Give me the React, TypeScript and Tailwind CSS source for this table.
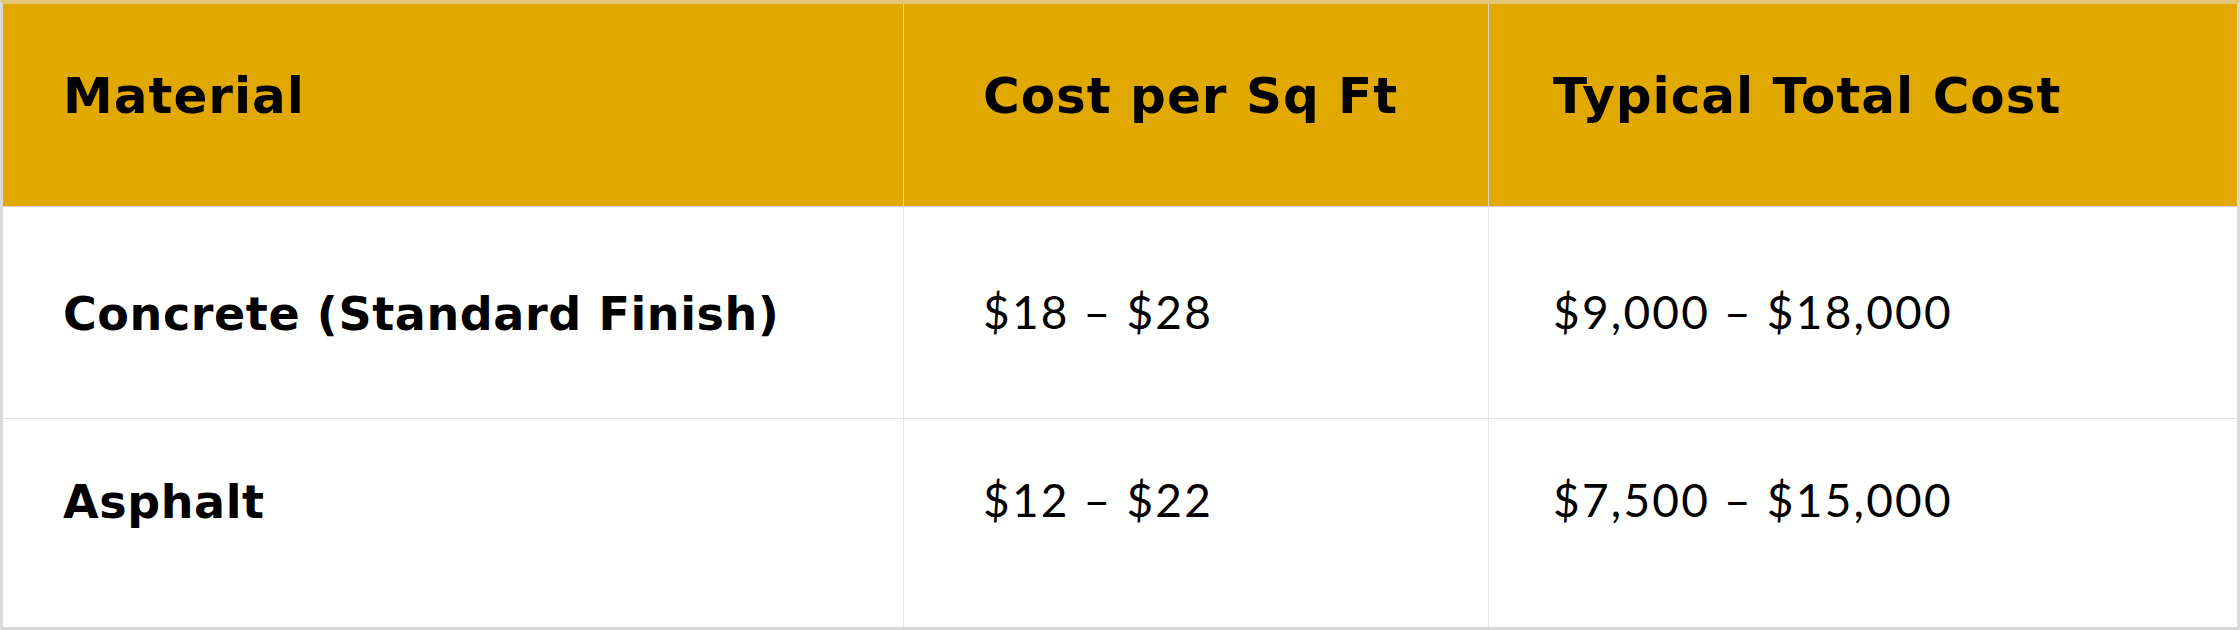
const rows = [
  { material: 'Concrete (Standard Finish)', sqft: '$18 – $28', total: '$9,000 – $18,000' },
  { material: 'Asphalt', sqft: '$12 – $22', total: '$7,500 – $15,000' },
];

const bold = "font-['DejaVu_Sans',sans-serif] font-bold tracking-[0.6px]";
const head = "font-['DejaVu_Sans',sans-serif] font-bold tracking-[1px]";
const regular = "font-['Lato',sans-serif] font-normal tracking-[2.2px]";

export default function App() {
  return (
    <div className="w-[2240px] h-[630px] bg-white text-black border-[3px] border-t-[4px] border-[#d9d9d9] border-t-[#e4c679] flex flex-col">
      {/* header */}
      <div className="grid grid-cols-[900px_585px_1fr] h-[203px] bg-[#e1a800] border-b border-[#d6d6d6]">
        <div className={`pl-[60px] pt-[67px] text-[50px] leading-none ${head}`}>Material</div>
        <div className={`pl-[79px] pt-[67px] text-[50px] leading-none border-l border-[#d6d6d6] ${head}`}>Cost per Sq Ft</div>
        <div className={`pl-[64px] pt-[67px] text-[50px] leading-none border-l border-[#d6d6d6] ${head}`}>Typical Total Cost</div>
      </div>

      {rows.map((r, i) => (
        <div
          key={r.material}
          className={`grid grid-cols-[900px_585px_1fr] ${i === 0 ? 'h-[212px] border-b border-[#e4e4e4]' : 'flex-1'}`}
        >
          <div className={`pl-[60px] text-[46px] leading-none ${i === 0 ? 'pt-[84px]' : 'pt-[60px]'} ${bold}`}>{r.material}</div>
          <div className={`pl-[79px] text-[46px] leading-none border-l border-[#e4e4e4] ${i === 0 ? 'pt-[82px]' : 'pt-[58px]'} ${regular}`}>{r.sqft}</div>
          <div className={`pl-[64px] text-[46px] leading-none border-l border-[#e4e4e4] ${i === 0 ? 'pt-[82px]' : 'pt-[58px]'} ${regular}`}>{r.total}</div>
        </div>
      ))}
    </div>
  );
}
